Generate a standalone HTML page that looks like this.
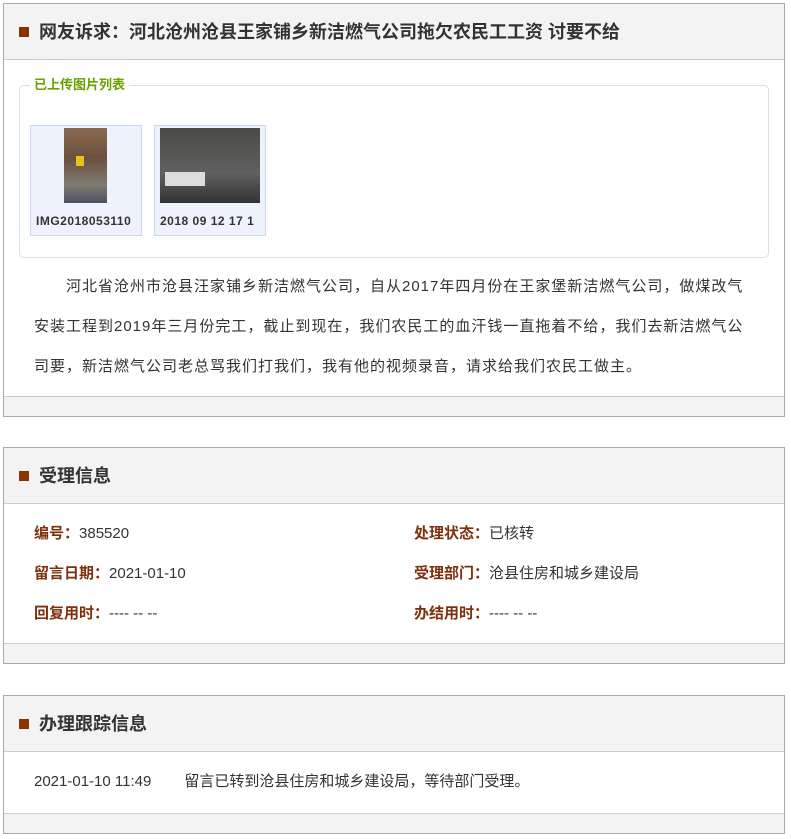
<!DOCTYPE html>
<html><head><meta charset="utf-8"><style>
*{margin:0;padding:0;box-sizing:border-box}
body{width:791px;height:839px;background:#fff;font-family:"Liberation Sans","Noto Sans CJK SC",sans-serif;color:#333;position:relative;overflow:hidden}
.p{position:absolute;left:3px;width:782px;border:1px solid #aaa;background:#fff}
.h{height:56px;background:#f3f3f3;border-bottom:1px solid #ccc;position:relative;font-weight:bold;font-size:18px;color:#333;line-height:56px;padding-left:35px}
.h:before{content:"";position:absolute;left:15px;top:23px;width:10px;height:10px;background:#8b3200}
.f{height:20px;background:#f3f3f3;border-top:1px solid #ccc}
.fs{position:absolute;left:15px;top:81px;width:750px;height:173px;border:1px solid #d5dff0;border-radius:5px}
.lg{position:absolute;left:10px;top:-9px;background:#fff;padding:0 4px;color:#6aa000;font-size:13px;font-weight:bold;line-height:16px}
.th{position:absolute;top:39px;width:112px;height:111px;background:#eef2fd;border:1px solid #cdd9ee;font-size:12px;font-weight:bold;color:#333;overflow:hidden;white-space:nowrap}
.th span{position:absolute;top:88px;left:5px;letter-spacing:0.5px}
.txt{position:absolute;left:30px;width:760px;font-size:15px;line-height:40px;white-space:nowrap;letter-spacing:1px}
.row{position:absolute;font-size:15px}
.row b{color:#7e2f0c}
</style></head><body>
<div class="p" style="top:3px;height:414px">
<div class="h">网友诉求：河北沧州沧县王家铺乡新洁燃气公司拖欠农民工工资 讨要不给</div>
<div class="fs"><div class="lg">已上传图片列表</div>
<div class="th" style="left:10px"><div style="position:absolute;left:33px;top:2px;width:43px;height:75px;background:linear-gradient(180deg,#8a6a50,#6b5040 40%,#807a70 75%,#505060)"><div style="position:absolute;left:12px;top:28px;width:8px;height:10px;background:#e8c020"></div></div><span>IMG2018053110</span></div>
<div class="th" style="left:134px"><div style="position:absolute;left:5px;top:2px;width:100px;height:75px;background:linear-gradient(180deg,#4a4a48,#606060 60%,#333)"><div style="position:absolute;left:5px;top:44px;width:40px;height:14px;background:#ddd"></div></div><span>2018 09 12 17 1</span></div>
</div>
<div class="txt" style="top:263px">&emsp;&emsp;河北省沧州市沧县汪家铺乡新洁燃气公司，自从2017年四月份在王家堡新洁燃气公司，做煤改气<br>安装工程到2019年三月份完工，截止到现在，我们农民工的血汗钱一直拖着不给，我们去新洁燃气公<br>司要，新洁燃气公司老总骂我们打我们，我有他的视频录音，请求给我们农民工做主。</div>
<div class="f" style="position:absolute;left:0;right:0;bottom:0"></div>
</div>
<div class="p" style="top:447px;height:217px">
<div class="h">受理信息</div>
<div class="row" style="left:30px;top:74px"><b>编号：</b>385520</div>
<div class="row" style="left:30px;top:114px"><b>留言日期：</b>2021-01-10</div>
<div class="row" style="left:30px;top:154px"><b>回复用时：</b>---- -- --</div>
<div class="row" style="left:410px;top:74px"><b>处理状态：</b>已核转</div>
<div class="row" style="left:410px;top:114px"><b>受理部门：</b>沧县住房和城乡建设局</div>
<div class="row" style="left:410px;top:154px"><b>办结用时：</b>---- -- --</div>
<div class="f" style="position:absolute;left:0;right:0;bottom:0"></div>
</div>
<div class="p" style="top:695px;height:139px">
<div class="h">办理跟踪信息</div>
<div class="row" style="left:30px;top:74px">2021-01-10 11:49<span style="display:inline-block;width:33px"></span>留言已转到沧县住房和城乡建设局，等待部门受理。</div>
<div class="f" style="position:absolute;left:0;right:0;bottom:0"></div>
</div>
</body></html>
